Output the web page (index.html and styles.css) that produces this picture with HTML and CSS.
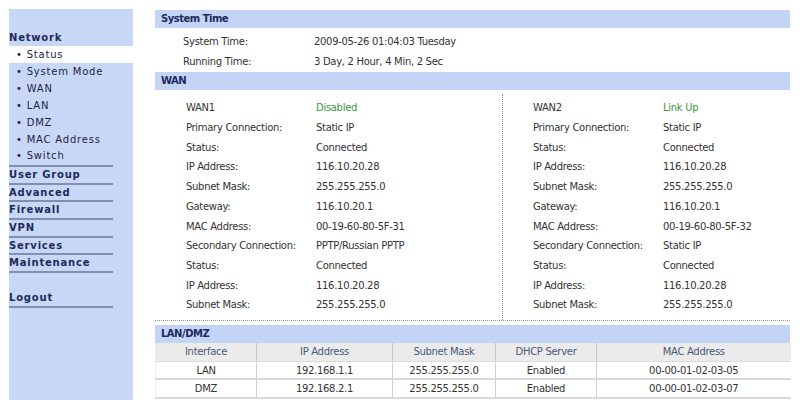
FILE: index.html
```html
<!DOCTYPE html>
<html>
<head>
<meta charset="utf-8">
<link rel="stylesheet" href="styles.css">
</head>
<body>
<div class="page">
  <nav class="side">
    <div class="side-top"></div>
    <div class="grp grp-first">Network</div>
    <div class="sub active">• Status</div>
    <div class="sub">• System Mode</div>
    <div class="sub">• WAN</div>
    <div class="sub">• LAN</div>
    <div class="sub">• DMZ</div>
    <div class="sub">• MAC Address</div>
    <div class="sub sub-last">• Switch</div>
    <div class="grp">User Group</div>
    <div class="grp">Advanced</div>
    <div class="grp">Firewall</div>
    <div class="grp">VPN</div>
    <div class="grp">Services</div>
    <div class="grp">Maintenance</div>
    <div class="gap"></div>
    <div class="grp">Logout</div>
  </nav>
  <main class="main">
    <div class="hdr">System Time</div>
    <div class="systime">
      <div class="row"><span class="lbl">System Time:</span><span class="val">2009-05-26 01:04:03 Tuesday</span></div>
      <div class="row"><span class="lbl">Running Time:</span><span class="val">3 Day, 2 Hour, 4 Min, 2 Sec</span></div>
    </div>
    <div class="hdr">WAN</div>
    <div class="wan">
      <div class="wcol wleft">
        <div class="row"><span class="lbl">WAN1</span><span class="val green">Disabled</span></div>
        <div class="row"><span class="lbl">Primary Connection:</span><span class="val">Static IP</span></div>
        <div class="row"><span class="lbl">Status:</span><span class="val">Connected</span></div>
        <div class="row"><span class="lbl">IP Address:</span><span class="val">116.10.20.28</span></div>
        <div class="row"><span class="lbl">Subnet Mask:</span><span class="val">255.255.255.0</span></div>
        <div class="row"><span class="lbl">Gateway:</span><span class="val">116.10.20.1</span></div>
        <div class="row"><span class="lbl">MAC Address:</span><span class="val">00-19-60-80-5F-31</span></div>
        <div class="row"><span class="lbl">Secondary Connection:</span><span class="val">PPTP/Russian PPTP</span></div>
        <div class="row"><span class="lbl">Status:</span><span class="val">Connected</span></div>
        <div class="row"><span class="lbl">IP Address:</span><span class="val">116.10.20.28</span></div>
        <div class="row"><span class="lbl">Subnet Mask:</span><span class="val">255.255.255.0</span></div>
      </div>
      <div class="wcol wright">
        <div class="row"><span class="lbl">WAN2</span><span class="val green">Link Up</span></div>
        <div class="row"><span class="lbl">Primary Connection:</span><span class="val">Static IP</span></div>
        <div class="row"><span class="lbl">Status:</span><span class="val">Connected</span></div>
        <div class="row"><span class="lbl">IP Address:</span><span class="val">116.10.20.28</span></div>
        <div class="row"><span class="lbl">Subnet Mask:</span><span class="val">255.255.255.0</span></div>
        <div class="row"><span class="lbl">Gateway:</span><span class="val">116.10.20.1</span></div>
        <div class="row"><span class="lbl">MAC Address:</span><span class="val">00-19-60-80-5F-32</span></div>
        <div class="row"><span class="lbl">Secondary Connection:</span><span class="val">Static IP</span></div>
        <div class="row"><span class="lbl">Status:</span><span class="val">Connected</span></div>
        <div class="row"><span class="lbl">IP Address:</span><span class="val">116.10.20.28</span></div>
        <div class="row"><span class="lbl">Subnet Mask:</span><span class="val">255.255.255.0</span></div>
      </div>
    </div>
    <div class="hdr hdr-lan">LAN/DMZ</div>
    <table class="lan">
      <colgroup>
        <col class="c1"><col class="c2"><col class="c3"><col class="c4"><col class="c5">
      </colgroup>
      <thead>
        <tr><th>Interface</th><th>IP Address</th><th>Subnet Mask</th><th>DHCP Server</th><th>MAC Address</th></tr>
      </thead>
      <tbody>
        <tr><td>LAN</td><td>192.168.1.1</td><td>255.255.255.0</td><td>Enabled</td><td>00-00-01-02-03-05</td></tr>
        <tr><td>DMZ</td><td>192.168.2.1</td><td>255.255.255.0</td><td>Enabled</td><td>00-00-01-02-03-07</td></tr>
      </tbody>
    </table>
  </main>
</div>
</body>
</html>
```
FILE: styles.css
```css
html, body {
  margin: 0;
  padding: 0;
  background: #ffffff;
}
body {
  font-family: "DejaVu Sans", Verdana, sans-serif;
  font-size: 10px;
  color: #333333;
}
.page {
  display: flex;
  align-items: flex-start;
  padding: 9px 0 0 9px;
}
.side {
  width: 124px;
  min-height: 391px;
  background: #c9d7f6;
  display: flex;
  flex-direction: column;
}
.side-top {
  height: 21px;
}
.grp {
  font-weight: bold;
  color: #1c2a5c;
  letter-spacing: 0.8px;
  width: 104px;
  height: 15.7px;
  line-height: 16px;
  border-bottom: 2px solid #8290b0;
}
.grp-first {
  width: auto;
  height: 16px;
  line-height: 16px;
  border-bottom: none;
}
.sub {
  height: 17px;
  line-height: 17px;
  padding-left: 7px;
  color: #1c2440;
  letter-spacing: 0.8px;
}
.sub.active {
  background: #ffffff;
}
.sub-last {
  width: 97px;
  height: 17px;
  border-bottom: 2px solid #8290b0;
  line-height: 16px;
}
.gap {
  height: 17px;
}
.main {
  margin-left: 22px;
  width: 635px;
  margin-top: 1px;
}
.hdr {
  background: #c4d4f7;
  height: 18px;
  line-height: 18px;
  padding-left: 6px;
  font-weight: bold;
  font-size: 10px;
  letter-spacing: -0.5px;
  color: #1c2a5c;
}
.row {
  display: flex;
  height: 19.7px;
  line-height: 19.7px;
  letter-spacing: -0.3px;
  white-space: nowrap;
}
.lbl {
  width: 130px;
  flex: none;
}
.systime {
  padding: 4px 0 1px 28px;
}
.systime .lbl {
  width: 131px;
}
.wan {
  display: flex;
  border-bottom: 1px dotted #9a9a9a;
}
.wcol {
  padding-top: 8px;
  padding-bottom: 5px;
}
.wleft {
  width: 316px;
  padding-left: 31px;
}
.wright {
  flex: 1;
  padding-left: 30px;
  border-left: 1px dotted #9a9a9a;
  margin-top: 4px;
  padding-top: 4px;
}
.green {
  color: #3c963c;
}
.hdr-lan {
  margin-top: 4px;
}
.lan {
  width: 635px;
  border-collapse: collapse;
  table-layout: fixed;
  letter-spacing: -0.3px;
}
.c1 { width: 101px; }
.c2 { width: 136px; }
.c3 { width: 103px; }
.c4 { width: 101px; }
.c5 { width: 194px; }
.lan th {
  background: #ebebeb;
  color: #4a5878;
  font-weight: normal;
  height: 18px;
  padding: 0;
  text-align: center;
  border-left: 1px solid #c8c8c8;
  border-bottom: 1px solid #dcdcdc;
}
.lan td {
  height: 16.5px;
  padding: 0;
  text-align: center;
  border-left: 1px solid #d0d0d0;
  border-bottom: 2px solid #d8d8d8;
}
.lan th:first-child, .lan td:first-child {
  border-left: 1px solid #eeeeee;
}
```
